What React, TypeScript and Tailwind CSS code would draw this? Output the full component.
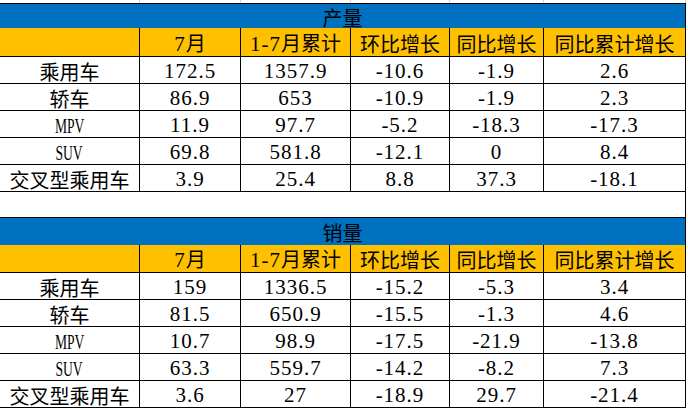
import React from 'react';

const COLS = ['w-[140px]', 'w-[101px]', 'w-[110px]', 'w-[99px]', 'w-[94px]', 'w-[142px]'];

const HEAD = ['', '7月', '1-7月累计', '环比增长', '同比增长', '同比累计增长'];

const production = [
  ['乘用车', '172.5', '1357.9', '-10.6', '-1.9', '2.6'],
  ['轿车', '86.9', '653', '-10.9', '-1.9', '2.3'],
  ['MPV', '11.9', '97.7', '-5.2', '-18.3', '-17.3'],
  ['SUV', '69.8', '581.8', '-12.1', '0', '8.4'],
  ['交叉型乘用车', '3.9', '25.4', '8.8', '37.3', '-18.1'],
];

const sales = [
  ['乘用车', '159', '1336.5', '-15.2', '-5.3', '3.4'],
  ['轿车', '81.5', '650.9', '-15.5', '-1.3', '4.6'],
  ['MPV', '10.7', '98.9', '-17.5', '-21.9', '-13.8'],
  ['SUV', '63.3', '559.7', '-14.2', '-8.2', '7.3'],
  ['交叉型乘用车', '3.6', '27', '-18.9', '29.7', '-21.4'],
];

// SimSun-ish look: half-width latin runs, full-width CJK runs
function Txt({ text }: { text: string }) {
  const runs = text.match(/[\x00-\x7F]+|[^\x00-\x7F]+/g) || [];
  return (
    <span className="leading-none whitespace-pre">
      {runs.map((r, i) => {
        if (/[^\x00-\x7F]/.test(r)) {
          return (
            <span key={i} className="font-['Noto_Sans_CJK_SC',sans-serif] text-[20px]">
              {r}
            </span>
          );
        }
        if (/[A-Za-z]/.test(r)) {
          // condensed latin letters
          return (
            <span key={i} className="inline-block scale-x-[0.68] font-['Liberation_Serif',serif] text-[20px]">
              {r}
            </span>
          );
        }
        return (
          <span key={i} className="font-['Liberation_Serif',serif] text-[21px] tracking-[1px]">
            {r}
          </span>
        );
      })}
    </span>
  );
}

function Block({
  title,
  rows,
  titleH,
  headH,
}: {
  title: string;
  rows: string[][];
  titleH: string;
  headH: string;
}) {
  return (
    <div className="w-[686px]">
      <div
        className={`${titleH} border-t border-r border-black bg-[#0070C0] flex items-center justify-center pt-[3px]`}
      >
        <Txt text={title} />
      </div>
      <div className={`${headH} flex bg-[#FFC000] border-b border-black`}>
        {HEAD.map((h, i) => (
          <div key={i} className={`${COLS[i]} h-full border-r border-black flex items-center justify-center pt-[3px]`}>
            <Txt text={h} />
          </div>
        ))}
      </div>
      {rows.map((row, r) => (
        <div key={r} className="h-[27px] flex border-b border-black">
          {row.map((c, i) => (
            <div key={i} className={`${COLS[i]} h-full border-r border-black flex items-center justify-center pt-[3px]`}>
              <Txt text={c} />
            </div>
          ))}
        </div>
      ))}
    </div>
  );
}

export default function App() {
  return (
    <div className="w-[688px] h-[409px] bg-white overflow-hidden text-black">
      {/* gridlines of the row above */}
      <div className="h-[3px] flex">
        {COLS.map((w, i) => (
          <div key={i} className={`${w} h-full border-r border-[#d4d4d4]`} />
        ))}
      </div>
      <Block title="产量" rows={production} titleH="h-[25px]" headH="h-[29px]" />
      <div className="w-[686px] h-[25px] border-r border-black" />
      <Block title="销量" rows={sales} titleH="h-[28px]" headH="h-[28px]" />
    </div>
  );
}
